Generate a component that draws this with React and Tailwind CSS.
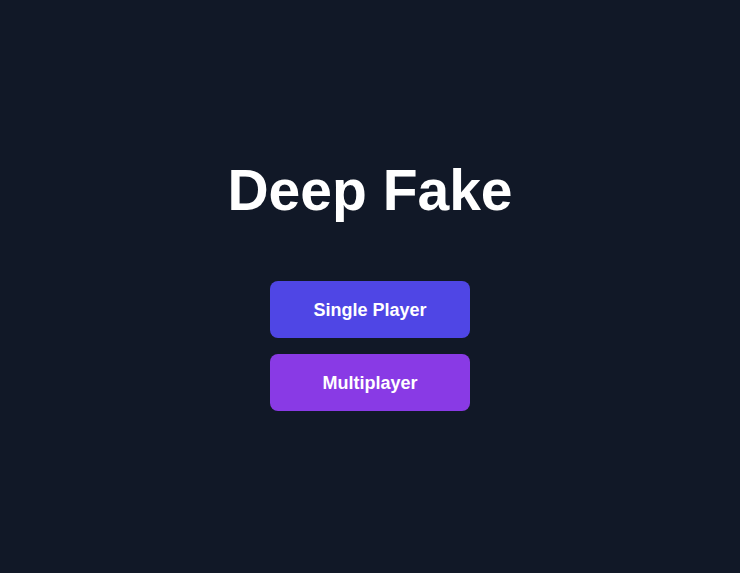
export default function App() {
  return (
    <div
      className="min-h-screen w-full bg-[#111827] flex flex-col items-center justify-center"
      style={{ fontFamily: '"Liberation Sans", Arial, sans-serif' }}
    >
      <h1 className="text-[57px] leading-none font-bold text-white mb-[62px]">Deep Fake</h1>
      <div className="flex flex-col gap-4">
        <button className="w-[200px] h-[57px] pt-[2px] rounded-lg bg-[#4f46e5] text-white text-[18px] font-bold">
          Single Player
        </button>
        <button className="w-[200px] h-[57px] pt-[2px] rounded-lg bg-[#893ae5] text-white text-[18px] font-bold">
          Multiplayer
        </button>
      </div>
    </div>
  );
}
